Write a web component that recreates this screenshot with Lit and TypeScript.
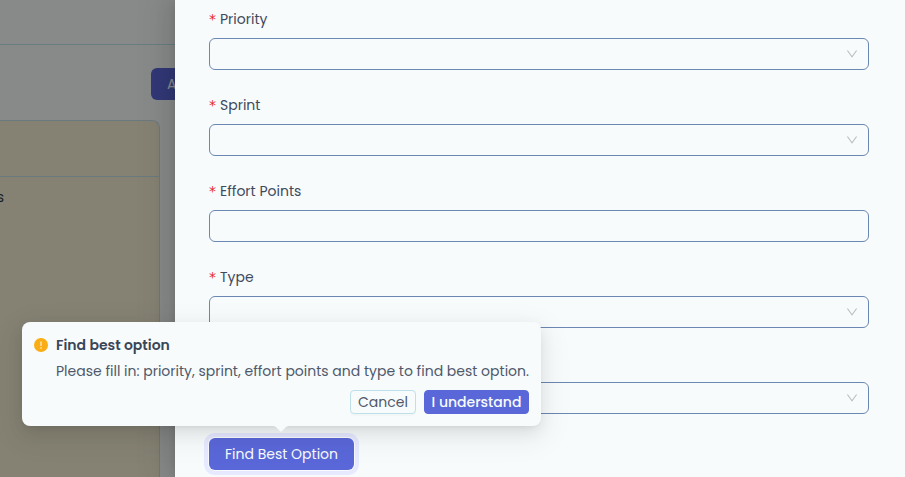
import { LitElement, html, css, svg } from "lit";
import { customElement, property } from "lit/decorators.js";

const chevron = svg`<path d="M884 256h-75c-5.1 0-9.9 2.5-12.9 6.6L512 654.2 227.9 262.6c-3-4.1-7.8-6.600-12.900-6.600h-75c-6.500 0-10.300 7.400-6.500 12.700l352.600 486.100c12.800 17.600 39 17.600 51.700 0l352.600-486.100c3.900-5.300.1-12.700-6.400-12.700z"/>`;

@customElement("form-field")
class FormField extends LitElement {
  @property() label = "";
  @property({ type: Boolean }) select = false;

  static styles = css`
    :host { display: flex; flex-direction: column; height: 86px; }
    .label { display: flex; align-items: center; gap: 4px; height: 22px; padding-bottom: 8px; color: #3f4a5c; }
    .star { width: 7px; height: 22px; font: 14px/22px "DejaVu Sans", sans-serif; color: #e5282c; }
    .box { box-sizing: border-box; height: 32px; border: 1px solid #6b88b3; border-radius: 6px; display: flex; align-items: center; justify-content: flex-end; padding-right: 10px; }
    .arrow { width: 12px; height: 12px; fill: rgba(0, 0, 0, 0.25); }
  `;

  render() {
    return html`
      <div class="label">${this.label ? html`<span class="star">*</span><span>${this.label}</span>` : ""}</div>
      <div class="box">${this.select ? html`<svg class="arrow" viewBox="64 64 896 896">${chevron}</svg>` : ""}</div>
    `;
  }
}

@customElement("app-root")
class AppRoot extends LitElement {
  static styles = css`
    :host {
      display: block; position: relative; width: 905px; height: 477px; overflow: hidden;
      background: #f7fbfc; color: #2d3748;
      font: 14px/22px Poppins, Inter, sans-serif;
    }
    .page { display: flex; flex-direction: column; height: 477px; width: 200px; }
    .header { box-sizing: border-box; height: 45px; border-bottom: 1px solid #bee3ea; }
    .toolbar { display: flex; padding: 23px 0 20px 151px; }
    .add { height: 32px; padding: 0 16px; border-radius: 6px; background: #5a67d8; color: #f7fbfc; line-height: 32px; }
    .card { box-sizing: border-box; width: 160px; flex: 1; background: #f2edd2; border: 1px solid #c1dde3; border-width: 1px 1px 0 0; border-top-right-radius: 8px; }
    .card-head { height: 55px; border-bottom: 1px solid #c1dde3; }
    .card-body { padding-top: 9px; width: 4px; direction: rtl; white-space: nowrap; }
    .mask { position: absolute; inset: 0; background: rgba(0, 0, 0, 0.45); }
    .drawer {
      position: absolute; inset: 0 0 0 175px; box-sizing: border-box; padding: 8px 36px 0 34px; background: #f7fbfc;
      box-shadow: -6px 0 16px 0 rgba(0, 0, 0, 0.08), -3px 0 6px -4px rgba(0, 0, 0, 0.12), -9px 0 28px 8px rgba(0, 0, 0, 0.05);
    }
    .find { display: inline-block; height: 32px; width: 145px; text-align: center; border-radius: 6px; background: #5a67d8; color: #f7fbfc; line-height: 32px; outline: 4px solid #e6e9ff; outline-offset: 1px; }
    .pop {
      position: absolute; left: 22px; top: 322px; width: 519px; height: 104px; box-sizing: border-box;
      padding: 12px; border-radius: 8px; background: #f7fbfc;
      box-shadow: 0 6px 16px 0 rgba(0, 0, 0, 0.08), 0 3px 6px -4px rgba(0, 0, 0, 0.12), 0 9px 28px 8px rgba(0, 0, 0, 0.05);
    }
    .arrow { position: absolute; left: 251px; top: 104px; width: 16px; height: 6px; fill: #f7fbfc; }
    .title { display: flex; align-items: center; gap: 8px; font-weight: 600; color: #3a4557; }
    .title svg { width: 14px; height: 14px; }
    .desc { margin: 4px 0 0 22px; white-space: nowrap; color: #4f596b; }
    .actions { display: flex; justify-content: flex-end; gap: 8px; margin-top: 8px; }
    .btn { box-sizing: border-box; height: 24px; border-radius: 4px; line-height: 22px; text-align: center; border: 1px solid #bee0e8; }
    .cancel { width: 66px; color: #4f596b; box-shadow: 0 2px 0 rgba(0, 0, 0, 0.02); }
    .ok { width: 105px; background: #5a67d8; border-color: #5a67d8; color: #f7fbfc; font-weight: 500; }
  `;

  render() {
    return html`
      <div class="page">
        <div class="header"></div>
        <div class="toolbar"><div class="add">A</div></div>
        <div class="card"><div class="card-head"></div><div class="card-body">s</div></div>
      </div>
      <div class="mask"></div>
      <div class="drawer">
        <form-field label="Priority" select></form-field>
        <form-field label="Sprint" select></form-field>
        <form-field label="Effort Points"></form-field>
        <form-field label="Type" select></form-field>
        <form-field select></form-field>
        <div class="find">Find Best Option</div>
      </div>
      <div class="pop">
        <div class="title">
          <svg viewBox="0 0 14 14"><circle cx="7" cy="7" r="7" fill="#faad14"/><rect x="6.500" y="3.500" width="1" height="4.500" fill="#fff"/><circle cx="7" cy="10" r=".75" fill="#fff"/></svg>
          <span class="title-text">Find best option</span>
        </div>
        <div class="desc">Please fill in: priority, sprint, effort points and type to find best option.</div>
        <div class="actions"><div class="btn cancel">Cancel</div><div class="btn ok">I understand</div></div>
        <svg class="arrow" viewBox="0 0 16 6"><path d="M0 0C2 0 3 1 4 2L7 5Q8 6 9 5L12 2C13 1 14 0 16 0Z"/></svg>
      </div>
    `;
  }
}
